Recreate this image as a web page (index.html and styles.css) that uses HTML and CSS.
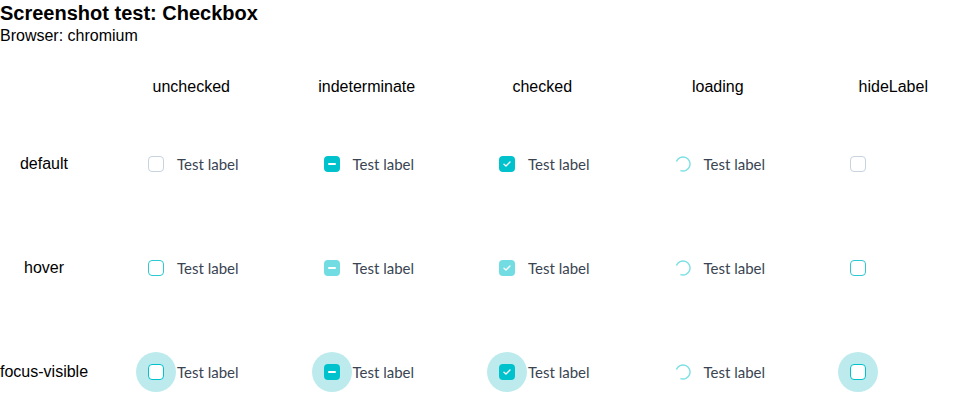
FILE: index.html
```html
<!DOCTYPE html>
<html>
<head>
<meta charset="utf-8">
<link rel="stylesheet" href="styles.css">
</head>
<body>
<h1 class="title">Screenshot test: Checkbox</h1>
<div class="browser">Browser: chromium</div>
<div class="grid">
  <div class="corner"></div>
  <div class="colhead">unchecked</div>
  <div class="colhead">indeterminate</div>
  <div class="colhead">checked</div>
  <div class="colhead">loading</div>
  <div class="colhead">hideLabel</div>

  <div class="rowhead"><span>default</span></div>
  <div class="cell"><span class="ring"><span class="box"></span></span><span class="label">Test label</span></div>
  <div class="cell"><span class="ring"><span class="box on"><span class="dash"></span></span></span><span class="label">Test label</span></div>
  <div class="cell"><span class="ring"><span class="box on"><svg class="tick" viewBox="0 0 8 6" width="8" height="6"><path d="M1 3.2 L3 5 L7 1" fill="none" stroke="#fff" stroke-width="1.3" stroke-linecap="round" stroke-linejoin="round"/></svg></span></span><span class="label">Test label</span></div>
  <div class="cell"><span class="ring"><svg class="spin" viewBox="0 0 16 16" width="16" height="16"><circle cx="8" cy="8" r="7" fill="none" stroke="#7ddfe3" stroke-width="1.4" stroke-dasharray="33 11" transform="rotate(200 8 8)"/></svg></span><span class="label">Test label</span></div>
  <div class="cell"><span class="ring"><span class="box"></span></span></div>

  <div class="rowhead"><span>hover</span></div>
  <div class="cell"><span class="ring"><span class="box hov"></span></span><span class="label">Test label</span></div>
  <div class="cell"><span class="ring"><span class="box on light"><span class="dash"></span></span></span><span class="label">Test label</span></div>
  <div class="cell"><span class="ring"><span class="box on light"><svg class="tick" viewBox="0 0 8 6" width="8" height="6"><path d="M1 3.2 L3 5 L7 1" fill="none" stroke="#fff" stroke-width="1.3" stroke-linecap="round" stroke-linejoin="round"/></svg></span></span><span class="label">Test label</span></div>
  <div class="cell"><span class="ring"><svg class="spin" viewBox="0 0 16 16" width="16" height="16"><circle cx="8" cy="8" r="7" fill="none" stroke="#7ddfe3" stroke-width="1.4" stroke-dasharray="33 11" transform="rotate(200 8 8)"/></svg></span><span class="label">Test label</span></div>
  <div class="cell"><span class="ring"><span class="box hov"></span></span></div>

  <div class="rowhead"><span>focus-visible</span></div>
  <div class="cell"><span class="ring focus"><span class="box foc"></span></span><span class="label">Test label</span></div>
  <div class="cell"><span class="ring focus"><span class="box on"><span class="dash"></span></span></span><span class="label">Test label</span></div>
  <div class="cell"><span class="ring focus"><span class="box on"><svg class="tick" viewBox="0 0 8 6" width="8" height="6"><path d="M1 3.2 L3 5 L7 1" fill="none" stroke="#fff" stroke-width="1.3" stroke-linecap="round" stroke-linejoin="round"/></svg></span></span><span class="label">Test label</span></div>
  <div class="cell"><span class="ring"><svg class="spin" viewBox="0 0 16 16" width="16" height="16"><circle cx="8" cy="8" r="7" fill="none" stroke="#7ddfe3" stroke-width="1.4" stroke-dasharray="33 11" transform="rotate(200 8 8)"/></svg></span><span class="label">Test label</span></div>
  <div class="cell"><span class="ring focus"><span class="box foc"></span></span></div>
</div>
</body>
</html>
```
FILE: styles.css
```css
html { overflow: hidden; }
body {
  margin: 0;
  font-family: "Liberation Sans", Arial, sans-serif;
  color: #000;
  background: #fff;
}
.title {
  margin: 0;
  font-size: 20px;
  line-height: 26px;
  font-weight: bold;
}
.browser {
  font-size: 16px;
  line-height: 20px;
}
.grid {
  display: grid;
  grid-template-columns: 103.5px repeat(5, 175.5px);
  grid-template-rows: 62px repeat(3, 104px);
  margin-top: 4px;
}
.colhead {
  font-size: 16px;
  text-align: center;
  align-self: end;
  line-height: 20px;
  padding-bottom: 15px;
}
.rowhead {
  display: flex;
  align-items: center;
}
.rowhead span {
  width: 88px;
  text-align: center;
  font-size: 16px;
  white-space: nowrap;
}
.cell {
  display: flex;
  align-items: center;
  padding-left: 32.5px;
}
.ring {
  width: 40px;
  height: 40px;
  border-radius: 50%;
  display: flex;
  align-items: center;
  justify-content: center;
  flex: none;
}
.ring.focus { background: #bdebed; }
.box {
  width: 16px;
  height: 16px;
  box-sizing: border-box;
  border: 1px solid #c7d3de;
  border-radius: 4px;
  background: #fff;
  display: flex;
  align-items: center;
  justify-content: center;
}
.box.hov { border-color: #2ccad2; }
.box.foc { border: 1.5px solid #00c2cc; }
.box.on {
  border: none;
  background: #00c2cc;
}
.box.on.light { background: #71dce1; }
.dash {
  width: 8px;
  height: 2px;
  border-radius: 1px;
  background: #fff;
}
.tick { display: block; }
.spin { display: block; }
.label {
  font-family: Lato, "Noto Sans", sans-serif;
  font-size: 15px;
  line-height: 18px;
  color: #3a4452;
  margin-left: 1px;
}
```
